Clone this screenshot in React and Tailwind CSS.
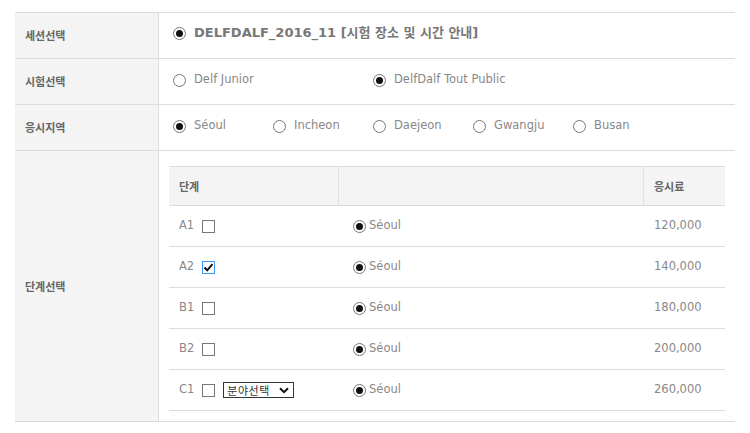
import React from "react";

const KR = { fontFamily: '"Noto Sans CJK KR", sans-serif' };
const LAT = { fontFamily: '"DejaVu Sans", "Noto Sans CJK KR", sans-serif' };

function Radio({ checked }) {
  return (
    <span className="inline-flex h-[13px] w-[13px] shrink-0 items-center justify-center rounded-full border border-[#767676] bg-white">
      {checked && <span className="h-[7px] w-[7px] rounded-full bg-[#111]" />}
    </span>
  );
}

function Check({ checked }) {
  return (
    <span
      className={
        "inline-flex h-[13px] w-[13px] shrink-0 items-center justify-center border bg-white " +
        (checked ? "border-[#3b99fc]" : "border-[#767676]")
      }
    >
      {checked && (
        <svg width="11" height="11" viewBox="0 0 11 11">
          <path d="M1.5 5.5 L4.2 8.3 L9.5 2.2" fill="none" stroke="#111" strokeWidth="2" />
        </svg>
      )}
    </span>
  );
}

function Label({ children }) {
  return (
    <div
      className="flex w-[144px] shrink-0 items-center border-r border-[#dcdcdc] bg-[#f4f4f4] pl-[10px] text-[11px] font-bold text-[#666]"
      style={KR}
    >
      {children}
    </div>
  );
}

function Opt({ checked, children, w }) {
  return (
    <div className={"flex items-center gap-[8px] " + w}>
      <Radio checked={checked} />
      <span className="text-[11.5px] text-[#888]" style={LAT}>{children}</span>
    </div>
  );
}

const rows = [
  { lv: "A1", checked: false, price: "120,000" },
  { lv: "A2", checked: true, price: "140,000" },
  { lv: "B1", checked: false, price: "180,000" },
  { lv: "B2", checked: false, price: "200,000" },
  { lv: "C1", checked: false, price: "260,000", select: true },
];

export default function App() {
  return (
    <div className="h-[433px] w-[750px] bg-white pl-[15px] pt-[12px]" style={LAT}>
      <div className="w-[720px] border-t border-[#dcdcdc]">
        <div className="flex h-[46px] border-b border-[#dcdcdc]">
          <Label>세션선택</Label>
          <div className="flex flex-1 items-center gap-[8px] pb-[5px] pl-[14px]">
            <Radio checked />
            <span className="text-[13px] font-bold text-[#777]" style={LAT}>
              DELFDALF_2016_11 [시험 장소 및 시간 안내]
            </span>
          </div>
        </div>
        <div className="flex h-[46px] border-b border-[#dcdcdc]">
          <Label>시험선택</Label>
          <div className="flex flex-1 items-center pb-[3px] pl-[14px]">
            <Opt w="w-[200px]">Delf Junior</Opt>
            <Opt checked>DelfDalf Tout Public</Opt>
          </div>
        </div>
        <div className="flex h-[46px] border-b border-[#dcdcdc]">
          <Label>응시지역</Label>
          <div className="flex flex-1 items-center pb-[3px] pl-[14px]">
            <Opt checked w="w-[100px]">Séoul</Opt>
            <Opt w="w-[100px]">Incheon</Opt>
            <Opt w="w-[100px]">Daejeon</Opt>
            <Opt w="w-[100px]">Gwangju</Opt>
            <Opt w="w-[100px]">Busan</Opt>
          </div>
        </div>
        <div className="flex border-b border-[#dcdcdc]">
          <Label>단계선택</Label>
          <div className="flex-1 pb-[10px] pl-[10px] pr-[10px] pt-[15px]">
            <div className="flex h-[40px] border-y border-[#dcdcdc] bg-[#f4f4f4] text-[11px] font-bold text-[#666]" style={KR}>
              <div className="flex w-[170px] items-center border-r border-[#e2e2e2] pl-[10px]">단계</div>
              <div className="w-[305px] border-r border-[#e2e2e2]" />
              <div className="flex flex-1 items-center pl-[10px]">응시료</div>
            </div>
            {rows.map((r) => (
              <div key={r.lv} className="flex h-[41px] border-b border-[#dcdcdc] text-[#888]">
                <div className="flex w-[170px] items-center gap-[8px] pl-[10px]">
                  <span style={LAT} className="text-[11.5px]">{r.lv}</span>
                  <Check checked={r.checked} />
                  {r.select && (
                    <span
                      className="flex h-[16px] w-[71px] items-center justify-between border border-[#333] pl-[3px] pr-[4px] text-[11px] tracking-[0.5px] text-[#333]"
                      style={KR}
                    >
                      분야선택
                      <svg width="10" height="7" viewBox="0 0 10 7">
                        <path d="M1 1.2 L5 5.2 L9 1.2" fill="none" stroke="#111" strokeWidth="2" />
                      </svg>
                    </span>
                  )}
                </div>
                <div className="flex w-[305px] items-center gap-[3px] pl-[14px]">
                  <Radio checked />
                  <span style={LAT} className="text-[11.5px]">Séoul</span>
                </div>
                <div className="flex flex-1 items-center pl-[10px]">
                  <span style={LAT} className="text-[11.5px]">{r.price}</span>
                </div>
              </div>
            ))}
          </div>
        </div>
      </div>
    </div>
  );
}
